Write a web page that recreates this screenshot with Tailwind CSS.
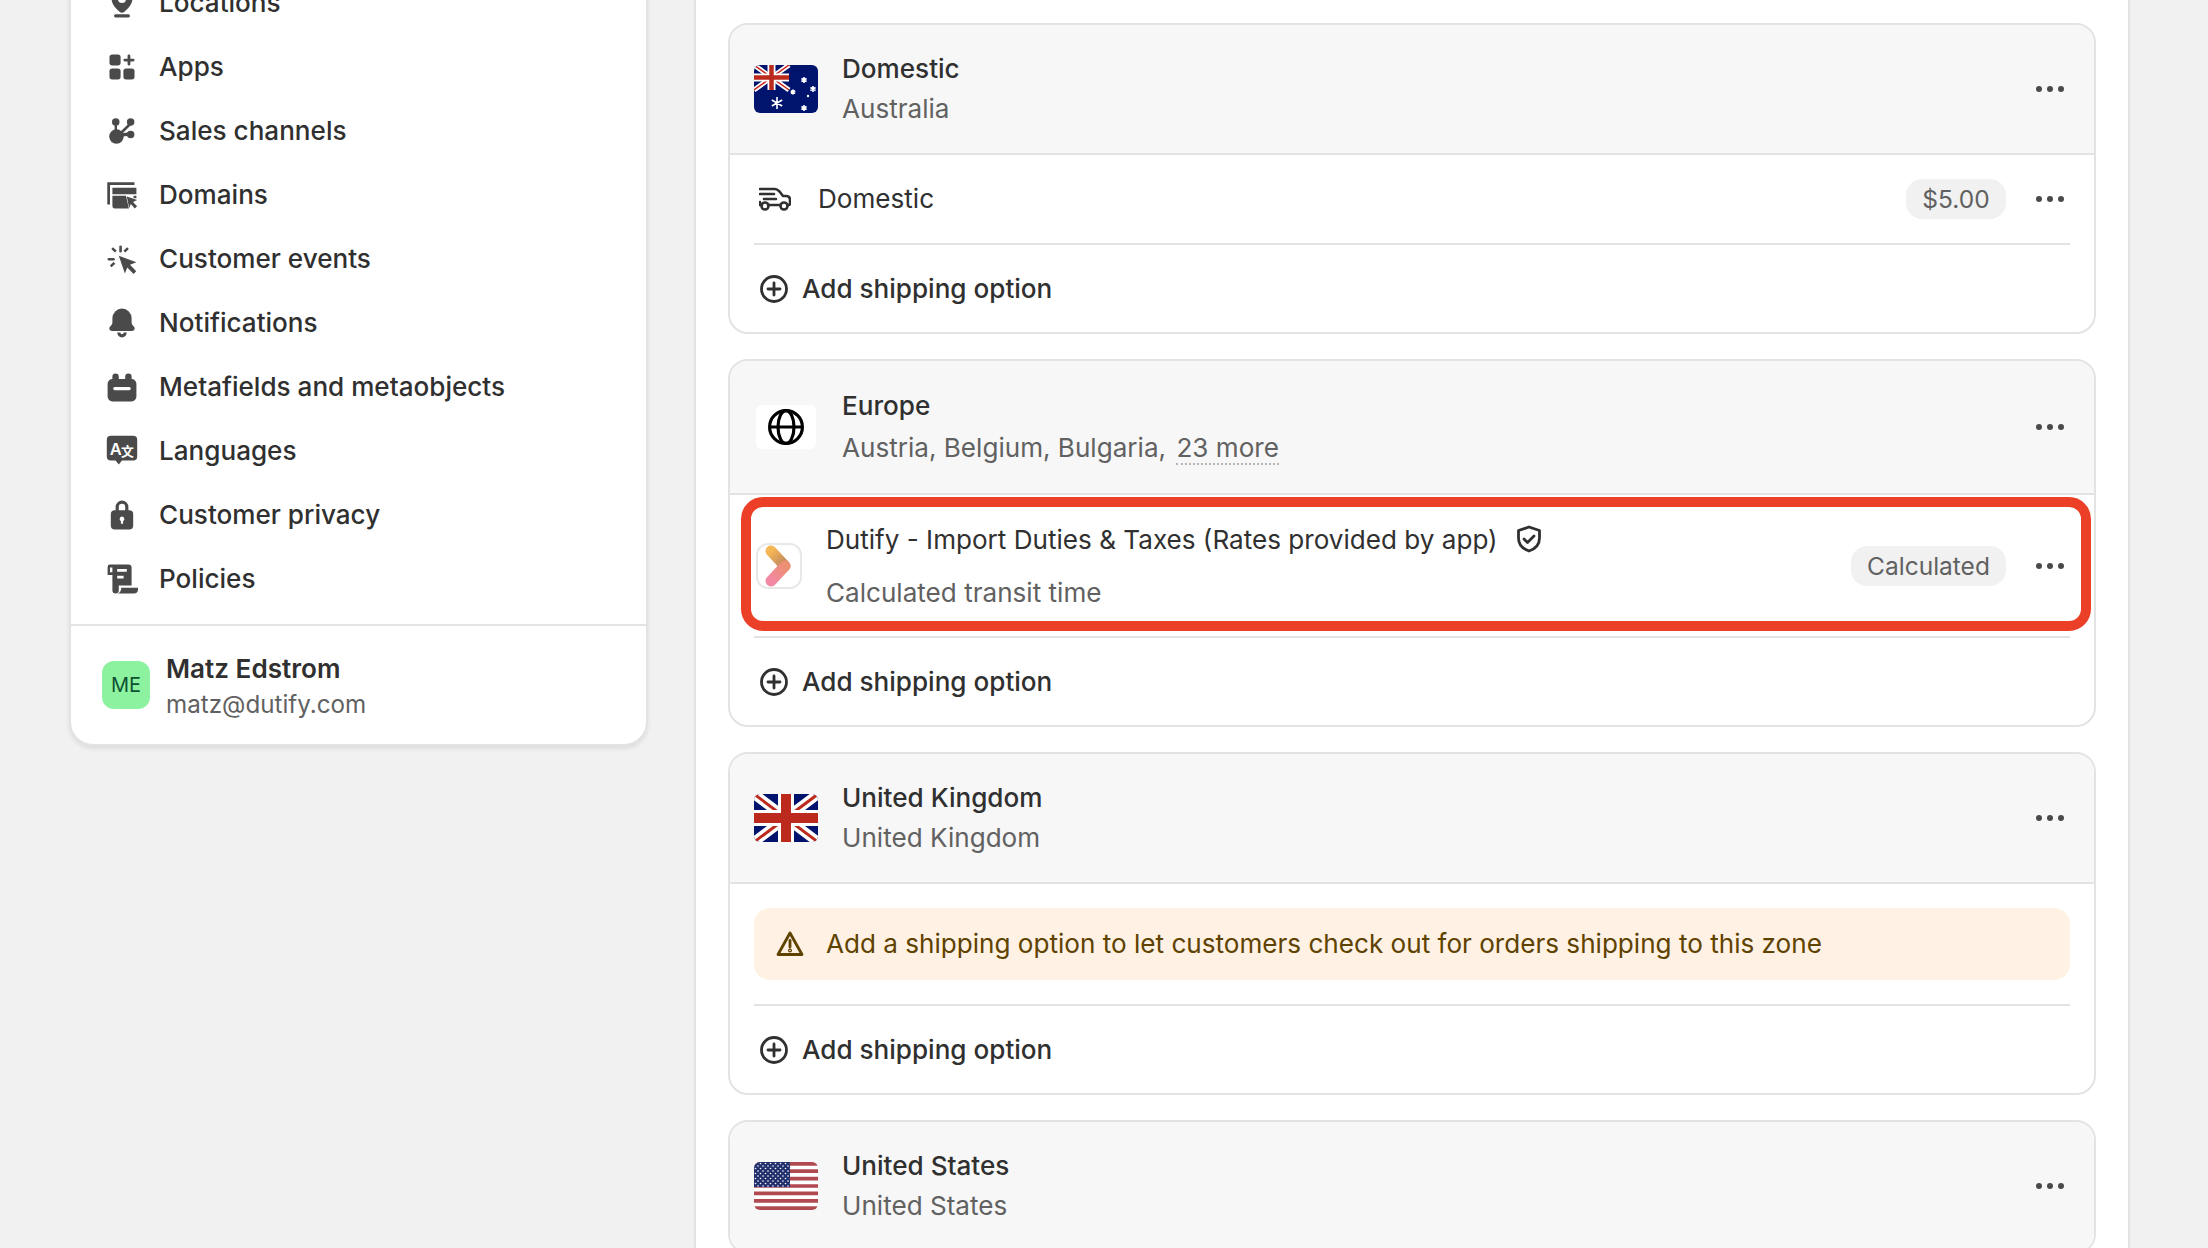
<!DOCTYPE html>
<html lang="en">
<head>
    <meta charset="UTF-8">
    <meta name="viewport" content="width=device-width, initial-scale=1.0">
    <title>Shipping and delivery</title>
    <script src="https://cdn.jsdelivr.net/npm/@tailwindcss/browser@4"></script>
</head>
<body class="bg-[#f1f1f1] font-['Inter',sans-serif] text-[#303030] text-[26.100px] leading-[36px] overflow-hidden">
<div class="flex items-start h-[1248px] overflow-hidden pl-[69px]">

    <!-- Settings sidebar -->
    <aside class="w-[579px] shrink-0 mt-[-29px] bg-white rounded-b-[24px] border-x-2 border-b-2 border-[#e3e3e3] shadow-[0_3px_4px_rgba(0,0,0,0.08)]">
        <ul class="pb-[13px] font-[450]">
            <li class="h-[64px] flex items-center pl-[35px]">
                <svg class="w-[32px] h-[32px] mr-[21px] text-[#4a4a4a]" viewBox="0 0 20 20" fill="currentColor"><path fill-rule="evenodd" d="M10 1a6.500 6.500 0 0 0-6.500 6.500c0 3.400 3 6.300 5 8 .9.700 2.100.700 3 0 2-1.700 5-4.600 5-8A6.500 6.500 0 0 0 10 1Zm0 9a2.500 2.500 0 1 0 0-5 2.500 2.500 0 0 0 0 5Z"/><rect x="5" y="17" width="10" height="2" rx="1"/></svg>
                <span>Locations</span>
            </li>
            <li class="h-[64px] flex items-center pl-[35px]">
                <svg class="w-[32px] h-[32px] mr-[21px] text-[#4a4a4a]" viewBox="-1.500 -1.500 23 23" fill="currentColor"><rect x="1" y="1" width="8" height="8" rx="2"/><rect x="1" y="11" width="8" height="8" rx="2"/><rect x="11" y="11" width="8" height="8" rx="2"/><path d="M15 1c.6 0 1 .4 1 1v2h2a1 1 0 1 1 0 2h-2v2a1 1 0 1 1-2 0V6h-2a1 1 0 1 1 0-2h2V2c0-.6.4-1 1-1Z"/></svg>
                <span>Apps</span>
            </li>
            <li class="h-[64px] flex items-center pl-[35px]">
                <svg class="w-[32px] h-[32px] mr-[21px] text-[#4a4a4a]" viewBox="-1.500 -1.500 23 23" fill="currentColor"><circle cx="5.500" cy="3.500" r="2.700"/><circle cx="16.200" cy="3.500" r="2.700"/><circle cx="16.200" cy="12.500" r="2.700"/><circle cx="6" cy="14" r="5.200"/><path d="M4.700 5h1.700v6H4.700ZM15 4.500l1.500 1.200L9 13l-1.500-1.200ZM9 11.700l7-.8.3 2.400-7 .8Z"/></svg>
                <span>Sales channels</span>
            </li>
            <li class="h-[64px] flex items-center pl-[35px]">
                <svg class="w-[32px] h-[32px] mr-[21px] text-[#4a4a4a]" viewBox="0 0 20 20" fill="currentColor"><path d="M.8 2h17v1.700H2.500V16H.8Z"/><path d="M4 5.500h15v4H4ZM4 10.500h8.500l1.800 8H5.500A1.500 1.500 0 0 1 4 17Z"/><path d="M13 11l6.500 2.200-2.600 1.100 2.500 2.700-1.400 1.400-2.500-2.700-1 2.500Z"/><path d="M17.200 10.500H19V12h-1.800Z"/></svg>
                <span>Domains</span>
            </li>
            <li class="h-[64px] flex items-center pl-[35px]">
                <svg class="w-[32px] h-[32px] mr-[21px] text-[#4a4a4a]" viewBox="0 0 20 20" fill="currentColor"><path d="m8 8 11 4-4 1.600 3.900 4-1.700 1.700-3.900-4L11.800 19Z"/><rect x="8.300" y="1.500" width="1.600" height="4.500" rx=".8"/><rect x="1" y="9.300" width="4.500" height="1.600" rx=".8"/><path d="m3.300 3.700 1.100-1.100 2.300 2.300-1.100 1.100ZM13.200 2.600l1.100 1.100L12 6l-1.100-1.100ZM4.700 11.800l1.100 1.100-2.300 2.300-1.100-1.100Z"/></svg>
                <span>Customer events</span>
            </li>
            <li class="h-[64px] flex items-center pl-[35px]">
                <svg class="w-[32px] h-[32px] mr-[21px] text-[#4a4a4a]" viewBox="0 0 20 20" fill="currentColor"><path d="M10 1a6 6 0 0 0-6 6v2.500c0 1-.5 1.800-1.400 2.700-1 1-.5 2.800 1.200 2.800h12.400c1.700 0 2.200-1.800 1.200-2.800-.9-.9-1.400-1.700-1.400-2.700V7a6 6 0 0 0-6-6Z"/><path fill-rule="evenodd" d="M7 16h6a3 3 0 0 1-6 0Zm2 0a1 1 0 0 0 2 0Z"/></svg>
                <span>Notifications</span>
            </li>
            <li class="h-[64px] flex items-center pl-[35px]">
                <svg class="w-[32px] h-[32px] mr-[21px] text-[#4a4a4a]" viewBox="0 0 20 20" fill="currentColor"><path fill-rule="evenodd" d="M4 3.500a2 2 0 0 1 4 0V5h4V3.500a2 2 0 0 1 4 0V5a3 3 0 0 1 3 3v8a3 3 0 0 1-3 3H4a3 3 0 0 1-3-3V8a3 3 0 0 1 3-3Zm1.500 6.500h9a1 1 0 0 1 0 2h-9a1 1 0 0 1 0-2Z"/></svg>
                <span>Metafields and metaobjects</span>
            </li>
            <li class="h-[64px] flex items-center pl-[35px]">
                <svg class="w-[32px] h-[32px] mr-[21px]" viewBox="0 0 20 20"><path fill="#4a4a4a" d="M3 .500h14A2.500 2.500 0 0 1 19.500 3v10.500a2.500 2.500 0 0 1-2.500 2.500h-7l-2 2.500L6 16H3a2.500 2.500 0 0 1-2.500-2.500V3A2.500 2.500 0 0 1 3 .500Z"/><text x="2.300" y="12.500" font-size="10.300" font-weight="600" fill="#fff" font-family="Inter, sans-serif">A</text><text x="9.300" y="13" font-size="8" font-weight="700" fill="#fff" font-family="'Noto Sans CJK SC', sans-serif">文</text></svg>
                <span>Languages</span>
            </li>
            <li class="h-[64px] flex items-center pl-[35px]">
                <svg class="w-[32px] h-[32px] mr-[21px] text-[#4a4a4a]" viewBox="0 0 20 20" fill="currentColor"><path fill-rule="evenodd" d="M6 7V5a4 4 0 1 1 8 0v2h.500A2.500 2.500 0 0 1 17 9.500v7a2.500 2.500 0 0 1-2.500 2.500h-9A2.500 2.500 0 0 1 3 16.500v-7A2.500 2.500 0 0 1 5.500 7Zm2 0h4V5a2 2 0 1 0-4 0Zm2 4a1.500 1.500 0 0 0-.7 2.800V15.500h1.400V13.800A1.500 1.500 0 0 0 10 11Z"/></svg>
                <span>Customer privacy</span>
            </li>
            <li class="h-[64px] flex items-center pl-[35px]">
                <svg class="w-[32px] h-[32px] mr-[21px] text-[#4a4a4a]" viewBox="0 0 20 20" fill="currentColor"><path fill-rule="evenodd" d="M2.500 1H14a2 2 0 0 1 2 2v11H8v3a2 2 0 0 1-4 0V7.500H1V2.500A1.500 1.500 0 0 1 2.500 1Zm0 1.800v3H4v-3Zm4.500 1v1.700h6V3.800Zm0 4.200v1.700h4V8Z"/><path d="M9.500 15.500H20v1c0 1.500-1 2.500-2.500 2.500H7.500c1.500-.5 2-2 2-3.500Z"/></svg>
                <span>Policies</span>
            </li>
        </ul>
        <div class="h-[120px] border-t-2 border-[#e3e3e3] flex items-center pl-[31px]">
            <div class="w-[48px] h-[48px] rounded-[12px] bg-[#8cf29f] text-[#0c5132] text-[20px] flex items-center justify-center">ME</div>
            <div class="ml-[16px] pt-[4px]">
                <div class="font-semibold leading-[36px]">Matz Edstrom</div>
                <div class="text-[#616161] text-[24.200px] leading-[36px]">matz@dutify.com</div>
            </div>
        </div>
    </aside>

    <!-- Shipping zones panel -->
    <main class="w-[1436px] ml-[46px] h-full bg-white border-x-2 border-[#e3e3e3] px-[32px] pt-[23px] flex flex-col gap-[25px]">

        <!-- Domestic -->
        <section class="shrink-0 rounded-[20px] border-2 border-[#e3e3e3] overflow-hidden">
            <div class="h-[130px] bg-[#f7f7f7] border-b-2 border-[#e3e3e3] flex items-center pl-[24px] pr-[30px]">
                <svg class="w-[64px] h-[48px] rounded-[6px] shrink-0" viewBox="0 0 64 48"><rect width="64" height="48" fill="#00146e"/><path d="M0 0 35 25M35 0 0 25" stroke="#fff" stroke-width="5"/><path d="M0 0 35 25M35 0 0 25" stroke="#c8261c" stroke-width="1.500"/><path d="M17.500 0v25M0 12.500h35" stroke="#fff" stroke-width="8"/><path d="M17.500 0v25M0 12.500h35" stroke="#bb2a1c" stroke-width="4.500"/><path d="M23 32v12M17.800 35l10.400 6M17.800 41l10.400-6M50 12v6M47.400 13.500l5.200 3M47.400 16.500l5.200-3M39 24.500v5M36.800 25.700l4.400 2.600M36.800 28.300l4.400-2.600M59 21v6M56.400 22.500l5.200 3M56.400 25.500l5.200-3M50 40v6M47.400 41.500l5.200 3M47.400 44.500l5.200-3" stroke="#fff" stroke-width="1.600"/><circle cx="54" cy="31" r="1.200" fill="#fff"/></svg>
                <div class="ml-[24px]">
                    <div class="font-medium leading-[40px]">Domestic</div>
                    <div class="text-[#616161] leading-[40px]">Australia</div>
                </div>
                <svg class="w-[28px] h-[8px] ml-auto text-[#4a4a4a]" viewBox="0 0 28 8" fill="currentColor"><circle cx="3" cy="4" r="3"/><circle cx="14" cy="4" r="3"/><circle cx="25" cy="4" r="3"/></svg>
            </div>
            <div class="px-[24px]">
                <div class="h-[90px] flex items-center border-b-2 border-[#e3e3e3]">
                    <svg class="w-[32px] h-[24px] ml-[5px] shrink-0" viewBox="0 0 32 24" fill="none" stroke="#303030" stroke-width="2.600" stroke-linecap="round" stroke-linejoin="round"><path d="M1 2h15c2 0 3 1 4.500 2.500L24 9h3c2.500 0 4 1.500 4 4v3.500c0 1-.5 1.500-1.500 1.500M9 18h12M3 18H1v-3M1 7h14M5 12h12"/><circle cx="6" cy="19" r="3.500"/><circle cx="25" cy="19" r="3.500"/></svg>
                    <span class="ml-[27px]">Domestic</span>
                    <span class="ml-auto w-[100px] h-[40px] rounded-[16px] bg-[#f1f1f1] text-[#616161] text-[24.500px] flex items-center justify-center">$5.00</span>
                    <svg class="w-[28px] h-[8px] ml-[30px] mr-[6px] text-[#4a4a4a]" viewBox="0 0 28 8" fill="currentColor"><circle cx="3" cy="4" r="3"/><circle cx="14" cy="4" r="3"/><circle cx="25" cy="4" r="3"/></svg>
                </div>
                <div class="h-[87px] flex items-center font-medium">
                    <svg class="w-[28px] h-[28px] ml-[6px] shrink-0" viewBox="0 0 28 28" fill="none" stroke="#303030" stroke-width="2.800" stroke-linecap="round"><circle cx="14" cy="14" r="12.500"/><path d="M14 8v12M8 14h12"/></svg>
                    <span class="ml-[14px]">Add shipping option</span>
                </div>
            </div>
        </section>

        <!-- Europe -->
        <section class="shrink-0 rounded-[20px] border-2 border-[#e3e3e3] overflow-hidden relative">
            <div class="h-[134px] bg-[#f7f7f7] border-b-2 border-[#e3e3e3] flex items-center pl-[24px] pr-[30px]">
                <div class="w-[60px] h-[44px] ml-[2px] rounded-[6px] bg-white shrink-0 flex items-center justify-center">
                    <svg class="w-[36px] h-[36px]" viewBox="0 0 36 36" fill="none" stroke="#000" stroke-width="3.200"><circle cx="18" cy="18" r="16.400"/><ellipse cx="18" cy="18" rx="8" ry="16.400"/><path d="M2 18h32"/></svg>
                </div>
                <div class="ml-[26px]">
                    <div class="font-medium leading-[42px]">Europe</div>
                    <div class="text-[#616161] leading-[42px]">Austria, Belgium, Bulgaria, <span class="ml-[3px] border-b-2 border-dotted border-[#b5b5b5]">23 more</span></div>
                </div>
                <svg class="w-[28px] h-[8px] ml-auto text-[#4a4a4a]" viewBox="0 0 28 8" fill="currentColor"><circle cx="3" cy="4" r="3"/><circle cx="14" cy="4" r="3"/><circle cx="25" cy="4" r="3"/></svg>
            </div>
            <div class="px-[24px]">
                <div class="h-[143px] flex items-center border-b-2 border-[#e3e3e3] relative">
                    <div class="w-[46px] h-[46px] ml-[2px] rounded-[12px] border-2 border-[#e8e8e8] bg-white shrink-0 flex items-center justify-center">
                        <svg class="w-[32px] h-[42px]" viewBox="0 0 32 42" fill="none" stroke-width="11" stroke-linecap="round" stroke-linejoin="round"><defs><linearGradient id="dutifyTop" gradientUnits="userSpaceOnUse" x1="8" y1="6" x2="22" y2="21"><stop offset="0" stop-color="#f6b756"/><stop offset="1" stop-color="#b9825f"/></linearGradient><linearGradient id="dutifyBottom" gradientUnits="userSpaceOnUse" x1="22" y1="21" x2="8" y2="36"><stop offset="0" stop-color="#ec8f72"/><stop offset="1" stop-color="#f287a6"/></linearGradient></defs><path d="M8 6 22 21" stroke="url(#dutifyTop)"/><path d="M22 21 8 36" stroke="url(#dutifyBottom)"/></svg>
                    </div>
                    <div class="ml-[24px]">
                        <div class="leading-[53px] flex items-center">Dutify - Import Duties &amp; Taxes (Rates provided by app)
                            <svg class="w-[28px] h-[28px] ml-[17px]" viewBox="0 0 28 28" fill="none" stroke="#303030" stroke-width="2.800" stroke-linejoin="round" stroke-linecap="round"><path d="M14 2 24.500 5.500V13c0 6.500-4.500 11-10.500 13C8 24 3.500 19.500 3.500 13V5.500Z"/><path d="m9 14 3.500 3.500L19 11"/></svg>
                        </div>
                        <div class="text-[#616161] leading-[53px]">Calculated transit time</div>
                    </div>
                    <span class="ml-auto w-[155px] h-[40px] rounded-[16px] bg-[#f1f1f1] text-[#616161] text-[24.500px] flex items-center justify-center">Calculated</span>
                    <svg class="w-[28px] h-[8px] ml-[30px] mr-[6px] text-[#4a4a4a]" viewBox="0 0 28 8" fill="currentColor"><circle cx="3" cy="4" r="3"/><circle cx="14" cy="4" r="3"/><circle cx="25" cy="4" r="3"/></svg>
                    <!-- red highlight drawn over the screenshot -->
                    <div class="absolute left-[-13px] right-[-21px] top-[2px] h-[134px] rounded-[22px] border-[10px] border-[#eb4027] pointer-events-none"></div>
                </div>
                <div class="h-[87px] flex items-center font-medium">
                    <svg class="w-[28px] h-[28px] ml-[6px] shrink-0" viewBox="0 0 28 28" fill="none" stroke="#303030" stroke-width="2.800" stroke-linecap="round"><circle cx="14" cy="14" r="12.500"/><path d="M14 8v12M8 14h12"/></svg>
                    <span class="ml-[14px]">Add shipping option</span>
                </div>
            </div>
        </section>

        <!-- United Kingdom -->
        <section class="shrink-0 rounded-[20px] border-2 border-[#e3e3e3] overflow-hidden">
            <div class="h-[130px] bg-[#f7f7f7] border-b-2 border-[#e3e3e3] flex items-center pl-[24px] pr-[30px]">
                <svg class="w-[64px] h-[48px] rounded-[6px] shrink-0" viewBox="0 0 64 48"><rect width="64" height="48" fill="#00146e"/><path d="M0 0 64 48M64 0 0 48" stroke="#fff" stroke-width="10"/><path d="M0 0 64 48M64 0 0 48" stroke="#bb2a1c" stroke-width="3"/><path d="M32 0v48M0 24h64" stroke="#fff" stroke-width="16"/><path d="M32 0v48M0 24h64" stroke="#bb2a1c" stroke-width="10"/></svg>
                <div class="ml-[24px]">
                    <div class="font-medium leading-[40px]">United Kingdom</div>
                    <div class="text-[#616161] leading-[40px]">United Kingdom</div>
                </div>
                <svg class="w-[28px] h-[8px] ml-auto text-[#4a4a4a]" viewBox="0 0 28 8" fill="currentColor"><circle cx="3" cy="4" r="3"/><circle cx="14" cy="4" r="3"/><circle cx="25" cy="4" r="3"/></svg>
            </div>
            <div class="px-[24px]">
                <div class="pt-[24px] pb-[24px] border-b-2 border-[#e3e3e3]">
                    <div class="h-[72px] rounded-[16px] bg-[#fff1e3] text-[#5e4200] flex items-center pl-[22px]">
                        <svg class="w-[28px] h-[28px] shrink-0" viewBox="0 0 28 28" fill="none" stroke="#5e4200" stroke-width="2.800" stroke-linejoin="round" stroke-linecap="round"><path d="M14 3 26 24.500H2Z"/><path d="M14 10.500v6.500"/><circle cx="14" cy="20.500" r=".6"/></svg>
                        <span class="ml-[22px]">Add a shipping option to let customers check out for orders shipping to this zone</span>
                    </div>
                </div>
                <div class="h-[87px] flex items-center font-medium">
                    <svg class="w-[28px] h-[28px] ml-[6px] shrink-0" viewBox="0 0 28 28" fill="none" stroke="#303030" stroke-width="2.800" stroke-linecap="round"><circle cx="14" cy="14" r="12.500"/><path d="M14 8v12M8 14h12"/></svg>
                    <span class="ml-[14px]">Add shipping option</span>
                </div>
            </div>
        </section>

        <!-- United States -->
        <section class="shrink-0 rounded-[20px] border-2 border-[#e3e3e3] overflow-hidden">
            <div class="h-[130px] bg-[#f7f7f7] border-b-2 border-[#e3e3e3] flex items-center pl-[24px] pr-[30px]">
                <svg class="w-[64px] h-[48px] rounded-[6px] shrink-0" viewBox="0 0 64 48"><defs><pattern id="usStars" width="5" height="5" patternUnits="userSpaceOnUse"><circle cx="1.500" cy="1.500" r=".8" fill="#fff"/><circle cx="4" cy="4" r=".8" fill="#fff"/></pattern></defs><rect width="64" height="48" fill="#fff"/><path d="M0 1.800h64M0 9.200h64M0 16.600h64M0 24h64M0 31.400h64M0 38.800h64M0 46.200h64" stroke="#b04a50" stroke-width="3.700"/><rect width="36" height="25" fill="#23306e"/><rect width="36" height="25" fill="url(#usStars)"/></svg>
                <div class="ml-[24px]">
                    <div class="font-medium leading-[40px]">United States</div>
                    <div class="text-[#616161] leading-[40px]">United States</div>
                </div>
                <svg class="w-[28px] h-[8px] ml-auto text-[#4a4a4a]" viewBox="0 0 28 8" fill="currentColor"><circle cx="3" cy="4" r="3"/><circle cx="14" cy="4" r="3"/><circle cx="25" cy="4" r="3"/></svg>
            </div>
        </section>
    </main>
</div>
</body>
</html>
